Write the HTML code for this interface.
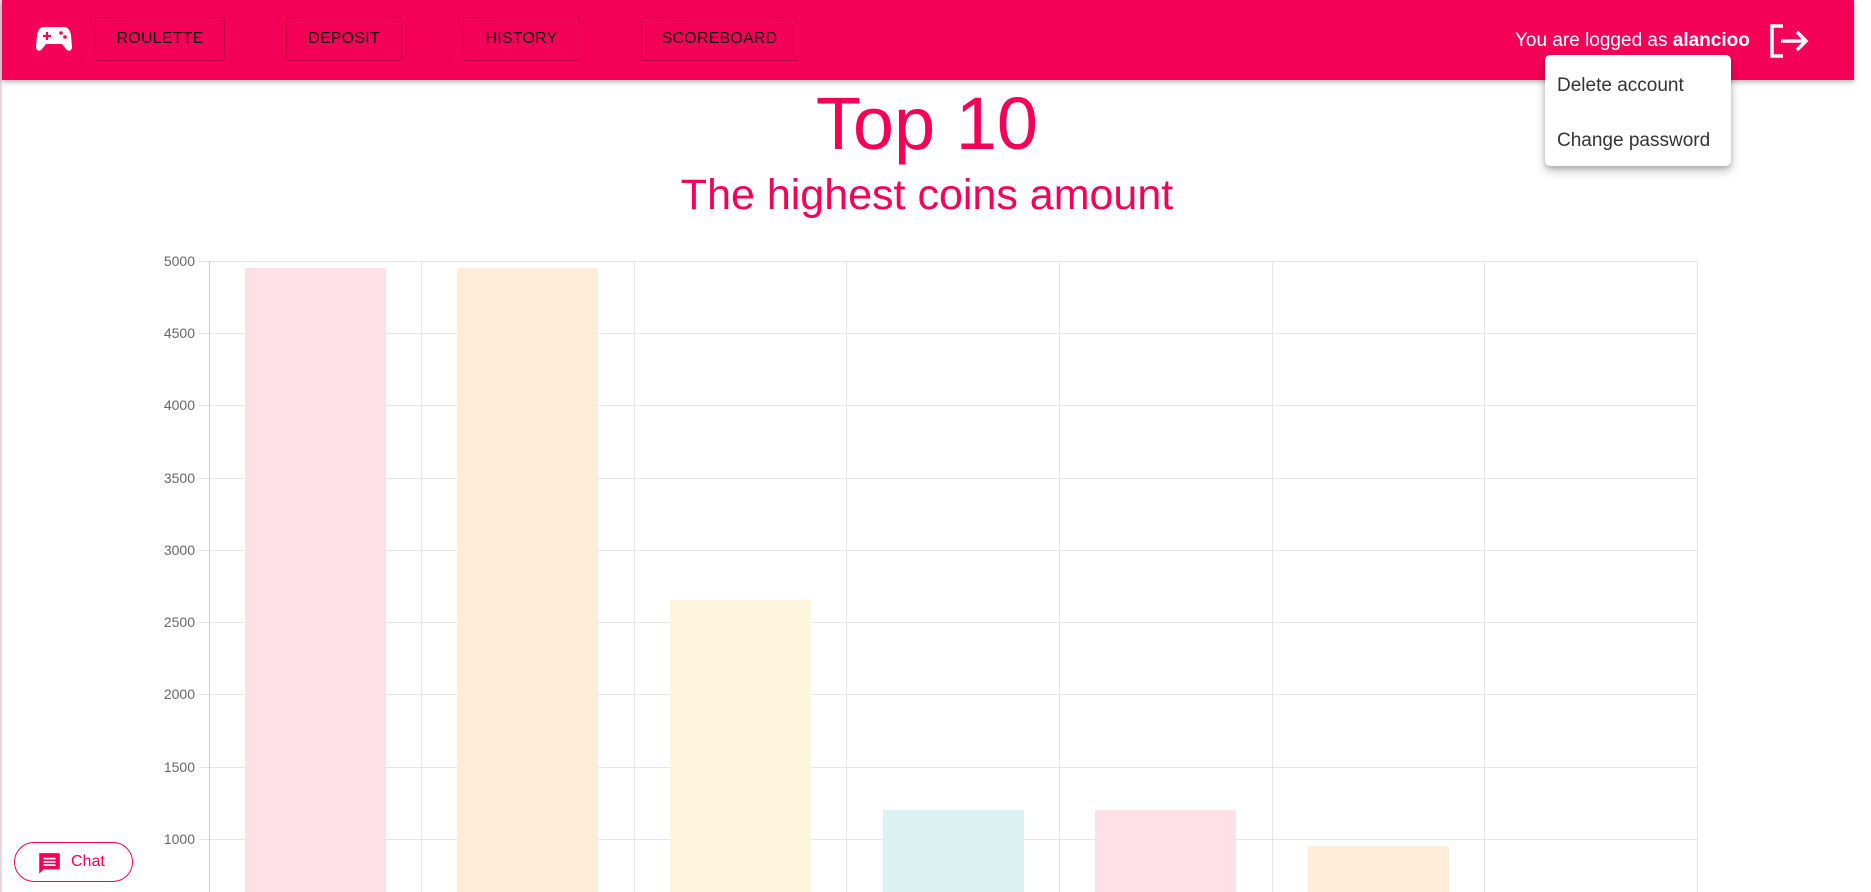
<!DOCTYPE html>
<html><head><meta charset="utf-8"><style>
html,body{margin:0;padding:0;width:1871px;height:892px;overflow:hidden;background:#fff;font-family:"Liberation Sans",sans-serif}
.nav{position:absolute;left:2px;top:0;width:1852px;height:80px;background:#f50057;box-shadow:0 2px 5px rgba(0,0,0,.3)}
.btn{position:absolute;top:17px;height:44px;border:1px solid rgba(0,0,0,.2);border-radius:4px;box-sizing:border-box;display:flex;align-items:center;justify-content:center;font-size:16px;color:#111;letter-spacing:.2px}
.user{position:absolute;top:30px;color:#fff;font-size:19px}
.menu{position:absolute;left:1545px;top:55px;width:186px;height:111px;background:#fff;border-radius:5px;box-shadow:0 5px 10px rgba(0,0,0,.25),0 2px 4px rgba(0,0,0,.15)}
.menu div{position:absolute;left:12px;font-size:19px;color:#333}
.t1{position:absolute;left:0;width:1854px;text-align:center;color:#f50057;font-weight:300}
.chat{position:absolute;left:14px;top:842px;width:119px;height:40px;border:1.5px solid #f50057;border-radius:20px;box-sizing:border-box;color:#f50057;font-size:16px}
</style></head><body>
<div style="position:absolute;left:0;top:0;width:2px;height:892px;background:#e8d6e4"></div>
<div class="nav">
<svg style="position:absolute;left:34px;top:26px" width="36" height="26" viewBox="0 0 36 26"><path d="M8 1h20c4 0 6 3 7 8l1 12c0 4-4 5-6 2l-4-5H10l-4 5c-2 3-6 2-6-2L1 9C2 4 4 1 8 1z" fill="#fff"/><path d="M7 10h8M11 6v8" stroke="#f50057" stroke-width="2.2"/><circle cx="25" cy="7" r="1.8" fill="#f50057"/><circle cx="29" cy="11" r="1.8" fill="#f50057"/></svg>
<div class="btn" style="left:93px;width:130px">ROULETTE</div>
<div class="btn" style="left:284px;width:116px">DEPOSIT</div>
<div class="btn" style="left:461px;width:117px">HISTORY</div>
<div class="btn" style="left:639px;width:157px">SCOREBOARD</div>
<div class="user" style="left:1513px">You are logged as <b>alancioo</b></div>
<svg style="position:absolute;left:1767px;top:24px" width="42" height="34" viewBox="0 0 42 34"><path d="M14 2H3v30h11" fill="none" stroke="#fff" stroke-width="3.5"/><path d="M12 17h25M28 8l9 9-9 9" fill="none" stroke="#fff" stroke-width="3.5"/></svg>
</div>
<div class="menu"><div style="top:20px">Delete account</div><div style="top:75px">Change password</div></div>
<div class="t1" style="top:87px;font-size:74px;line-height:74px">Top 10</div>
<div class="t1" style="top:170px;font-size:43px;line-height:50px;font-weight:400">The highest coins amount</div>
<svg style="position:absolute;left:0;top:0" width="1871" height="892">
<g stroke="#e5e5e5" stroke-width="1">
<line x1="199" x2="1697" y1="261.5" y2="261.5"/><line x1="199" x2="1697" y1="333.5" y2="333.5"/><line x1="199" x2="1697" y1="405.5" y2="405.5"/><line x1="199" x2="1697" y1="478.5" y2="478.5"/><line x1="199" x2="1697" y1="550.5" y2="550.5"/><line x1="199" x2="1697" y1="622.5" y2="622.5"/><line x1="199" x2="1697" y1="694.5" y2="694.5"/><line x1="199" x2="1697" y1="767.5" y2="767.5"/><line x1="199" x2="1697" y1="839.5" y2="839.5"/>
<line x1="421.5" x2="421.5" y1="261" y2="892"/><line x1="634.5" x2="634.5" y1="261" y2="892"/><line x1="846.5" x2="846.5" y1="261" y2="892"/><line x1="1059.5" x2="1059.5" y1="261" y2="892"/><line x1="1272.5" x2="1272.5" y1="261" y2="892"/><line x1="1484.5" x2="1484.5" y1="261" y2="892"/><line x1="1697.5" x2="1697.5" y1="261" y2="892"/>
</g>
<line x1="209.5" x2="209.5" y1="261" y2="892" stroke="#ccc"/>
<g>
<rect x="245" y="268" width="141" height="700" fill="#ffe0e6"/>
<rect x="457" y="268" width="141" height="700" fill="#ffecd9"/>
<rect x="670" y="600" width="141" height="400" fill="#fff5dd"/>
<rect x="883" y="810" width="141" height="200" fill="#dbf2f2"/>
<rect x="1095" y="810" width="141" height="200" fill="#ffe0e6"/>
<rect x="1308" y="846" width="141" height="100" fill="#ffecd9"/>
</g>
<g fill="#666" font-size="14" text-anchor="end" font-family="Liberation Sans">
<text x="195" y="266">5000</text><text x="195" y="338">4500</text><text x="195" y="410">4000</text><text x="195" y="483">3500</text><text x="195" y="555">3000</text><text x="195" y="627">2500</text><text x="195" y="699">2000</text><text x="195" y="772">1500</text><text x="195" y="844">1000</text>
</g>
</svg>
<div class="chat"><svg style="position:absolute;left:21px;top:8px" width="26" height="26" viewBox="0 0 24 24"><path d="M3 2h18a1 1 0 011 1v13a1 1 0 01-1 1H7l-4 4z" fill="#f50057"/><path d="M7 7h11M7 10h11M7 13h11" stroke="#fff" stroke-width="1.6"/></svg><span style="position:absolute;left:56px;top:10px">Chat</span></div>
</body></html>
